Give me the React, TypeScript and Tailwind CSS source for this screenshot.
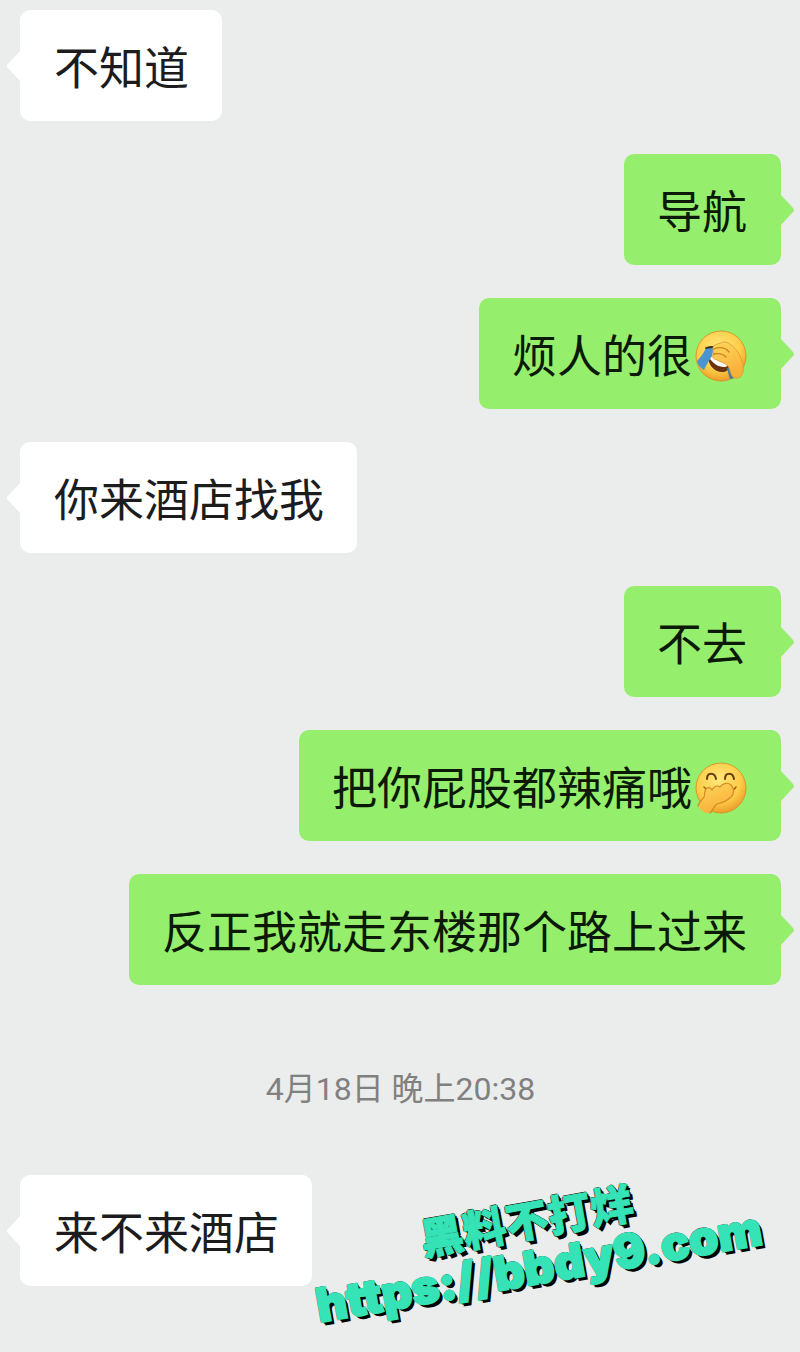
import type { ReactNode } from "react";
import { clsx } from "clsx";

type Message = {
  id: number;
  mine: boolean;
  text: string;
  emoji?: "facepalm" | "giggle";
};

const EARLIER: Message[] = [
  { id: 1, mine: false, text: "不知道" },
  { id: 2, mine: true, text: "导航" },
  { id: 3, mine: true, text: "烦人的很", emoji: "facepalm" },
  { id: 4, mine: false, text: "你来酒店找我" },
  { id: 5, mine: true, text: "不去" },
  { id: 6, mine: true, text: "把你屁股都辣痛哦", emoji: "giggle" },
  { id: 7, mine: true, text: "反正我就走东楼那个路上过来" },
];

const LATER: Message[] = [{ id: 8, mine: false, text: "来不来酒店" }];

function FaceBase({ id, label, children }: { id: string; label: string; children: ReactNode }) {
  return (
    <svg viewBox="0 0 52 52" className="w-[52px] h-[52px] ml-[3px] mb-1 shrink-0" role="img" aria-label={label}>
      <defs>
        <radialGradient id={id} cx="45%" cy="34%" r="68%">
          <stop offset="0%" stopColor="#ffe77a" />
          <stop offset="65%" stopColor="#fdcd48" />
          <stop offset="100%" stopColor="#eb9826" />
        </radialGradient>
        <linearGradient id={`${id}-hand`} x1="0" y1="0" x2="0.4" y2="1">
          <stop offset="0%" stopColor="#ffd75c" />
          <stop offset="100%" stopColor="#f9b03a" />
        </linearGradient>
      </defs>
      <circle cx="26" cy="26" r="25" fill={`url(#${id})`} stroke="#d98b22" strokeWidth="0.8" />
      {children}
    </svg>
  );
}

function Facepalm() {
  return (
    <FaceBase id="facepalm" label="捂脸">
      {/* open mouth and teeth */}
      <path d="M13 28c1 8 7 14 14 14 4 0 7-2 8-6L16 26z" fill="#6b3210" />
      <path d="M14 27l3-1 16 8c0 2-1 3-4 3-6 0-12-4-15-10z" fill="#fff" />
      {/* tears */}
      <path d="M11 18l7-1c0 3 0 6-1 9-3 5-6 9-8 14-4-2-6-5-7-9 3-3 6-7 9-13z" fill="#4a94d2" />
      <path d="M32 38c1 4 2 8 3 11 2 0 4-1 5-2l-3-9z" fill="#3f7ba6" />
      <path d="M11 18c3-1 5-1 8-1" fill="none" stroke="#3f2a10" strokeWidth="1.8" strokeLinecap="round" />
      {/* palm and fingers */}
      <path
        d="M18 17c1-2 4-3 8-4 3-2 7-1 10 2 6 4 9 10 11 16 2 5 2 11-1 15-2 3-7 3-9 0-2-3-2-7-4-10-3-3-7-4-11-6-3-1-5-2-4-4 0-1 1-1 1-2-1-2-1-5-1-7z"
        fill="url(#facepalm-hand)"
        stroke="#de9429"
        strokeWidth="0.8"
      />
      <path
        d="M19 19c5-2 11-2 15 3M19 24c5-1 9 0 12 3"
        fill="none"
        stroke="#c9821f"
        strokeWidth="1.3"
        strokeLinecap="round"
      />
    </FaceBase>
  );
}

function Giggle() {
  return (
    <FaceBase id="giggle" label="偷笑">
      <path
        d="M12 17c0-7 8-7 9 0M30 17c0-7 8-7 9 0"
        fill="none"
        stroke="#65400c"
        strokeWidth="2"
        strokeLinecap="round"
      />
      <path d="M9 25c1 2 3 2 5 2M36 28c3 0 4-1 5-3" fill="none" stroke="#9b5e15" strokeWidth="1.5" strokeLinecap="round" />
      {/* hand over the mouth */}
      <path
        d="M3 44c1-4 4-6 6-9 1-3 0-7 3-9 2-1 4 0 5 2 2-4 5-5 8-3 3-4 8-5 11-2 4 4 3 9 0 12-4 4-9 6-14 7-3 2-4 6-7 9-4 1-9-2-12-7z"
        fill="url(#giggle-hand)"
      />
      <path
        d="M3 44c1-4 4-6 6-9 1-3 0-7 3-9 2-1 4 0 5 2 2-4 5-5 8-3 3-4 8-5 11-2 4 4 3 9 0 12-4 4-9 6-14 7-3 2-4 6-7 9"
        fill="none"
        stroke="#d58a23"
        strokeWidth="1.2"
        strokeLinecap="round"
      />
    </FaceBase>
  );
}

function Bubble({ message }: { message: Message }) {
  const { mine, text, emoji } = message;

  return (
    <li className={clsx("flex", mine ? "justify-end" : "justify-start")}>
      <div
        className={clsx(
          "relative flex items-center rounded-[10px] pt-7 pb-5 text-[45px] leading-[63px]",
          mine ? "pl-[33px] pr-[34px] bg-[#95ef6c] text-[#0b1a06]" : "pl-[34px] pr-[33px] bg-white text-[#1c1c1e]"
        )}
      >
        <svg
          viewBox="0 0 15 32"
          aria-hidden="true"
          className={clsx(
            "absolute top-1/2 -translate-y-1/2 w-[15px] h-8",
            mine ? "left-full -ml-px fill-[#95ef6c]" : "right-full -mr-px -scale-x-100 fill-white"
          )}
        >
          <path d="M0 0l1 1 12 13q2 2 0 4L1 31l-1 1z" />
        </svg>
        <span>{text}</span>
        {emoji === "facepalm" && <Facepalm />}
        {emoji === "giggle" && <Giggle />}
      </div>
    </li>
  );
}

function Watermark() {
  return (
    <div className="absolute right-[39px] bottom-[62px] -rotate-10 flex flex-col items-center font-black whitespace-nowrap text-[#35e3b7] [text-shadow:1px_0_0_#000,-1px_0_0_#000,0_1px_0_#000,0_-1px_0_#000,2px_2px_0_#000,3px_4px_0_#000]">
      <p className="pr-2 text-[43px] leading-[46px] [-webkit-text-stroke:1px_#35e3b7]">黑料不打烊</p>
      <a
        href="https://bbdy9.com"
        className="text-[47px] leading-[46px] font-[Inter,sans-serif] [-webkit-text-stroke:2px_#35e3b7]"
      >
        https://bbdy9.com
      </a>
    </div>
  );
}

export default function App() {
  return (
    <main className="relative min-h-screen overflow-hidden bg-[#ebecec] pt-[10px] pb-[66px] pl-5 pr-[19px] font-[Roboto,'Noto_Sans_CJK_SC',sans-serif]">
      <ul className="flex flex-col gap-[33px]">
        {EARLIER.map((m) => (
          <Bubble key={m.id} message={m} />
        ))}
      </ul>

      <p className="pt-20 pb-[62px] text-center text-[32px] leading-[48px] text-[#808080]">
        <time>4月18日 晚上20:38</time>
      </p>

      <ul className="flex flex-col gap-[33px]">
        {LATER.map((m) => (
          <Bubble key={m.id} message={m} />
        ))}
      </ul>

      <Watermark />
    </main>
  );
}
